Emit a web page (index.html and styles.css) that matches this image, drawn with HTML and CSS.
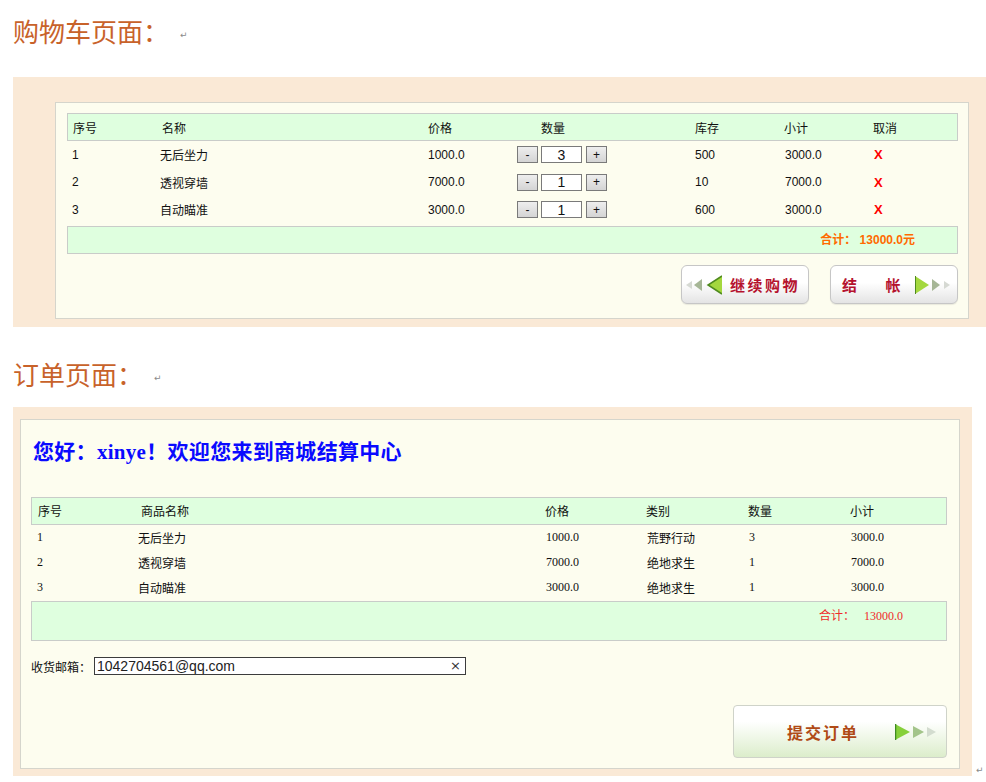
FILE: index.html
```html
<!DOCTYPE html>
<html lang="zh-CN">
<head>
<meta charset="utf-8">
<title>购物车与订单页面</title>
<link rel="stylesheet" href="styles.css">
</head>
<body>
<h2 class="doc-title doc-title-1">购物车页面：<span class="ret">↵</span></h2>
<section class="sec sec-cart">
  <div class="panel cart-panel">
    <div class="cart-table">
      <div class="c-row c-head">
        <span>序号</span><span>名称</span><span>价格</span><span class="qty-h">数量</span><span>库存</span><span>小计</span><span>取消</span>
      </div>
      <div class="c-row c-data">
        <span>1</span><span>无后坐力</span><span>1000.0</span>
        <span class="qty"><button class="qbtn">-</button><input class="qin" type="text" value="3"><button class="qbtn">+</button></span>
        <span>500</span><span>3000.0</span><span class="del">X</span>
      </div>
      <div class="c-row c-data">
        <span>2</span><span>透视穿墙</span><span>7000.0</span>
        <span class="qty"><button class="qbtn">-</button><input class="qin" type="text" value="1"><button class="qbtn">+</button></span>
        <span>10</span><span>7000.0</span><span class="del">X</span>
      </div>
      <div class="c-row c-data">
        <span>3</span><span>自动瞄准</span><span>3000.0</span>
        <span class="qty"><button class="qbtn">-</button><input class="qin" type="text" value="1"><button class="qbtn">+</button></span>
        <span>600</span><span>3000.0</span><span class="del">X</span>
      </div>
      <div class="c-total">合计： 13000.0元</div>
    </div>
    <div class="cart-actions">
      <a class="btn btn-back" href="#">
        <svg class="arr-l" width="36" height="20" viewBox="0 0 36 20">
          <polygon points="6,6 0,10 6,14" fill="#d6d9d3"/>
          <polygon points="16,4 8,10 16,16" fill="#a6b696"/>
          <polygon points="36,1 22,10 36,19" fill="#a4d83e"/>
          <polyline points="36,1 22,10 36,19" fill="none" stroke="#4f8a1e" stroke-width="1.5"/>
        </svg>
        <span class="btn-text">继续购物</span>
      </a>
      <a class="btn btn-pay" href="#">
        <span class="btn-text">结</span><span class="btn-text pay-2">帐</span>
        <svg class="arr-r" width="38" height="20" viewBox="0 0 38 20">
          <polygon points="0,1 14,10 0,19" fill="#a4d83e"/>
          <polyline points="0,1 0,19" fill="none" stroke="#4f8a1e" stroke-width="2"/>
          <polygon points="17,4 25,10 17,16" fill="#a6b696"/>
          <polygon points="29,6 35,10 29,14" fill="#d6d9d3"/>
        </svg>
      </a>
    </div>
  </div>
</section>

<h2 class="doc-title doc-title-2">订单页面：<span class="ret">↵</span></h2>
<div class="order-wrap">
  <section class="sec sec-order">
    <div class="panel order-panel">
      <h3 class="greet">您好：xinye！欢迎您来到商城结算中心</h3>
      <div class="order-table">
        <div class="o-row o-head">
          <span>序号</span><span>商品名称</span><span>价格</span><span>类别</span><span>数量</span><span>小计</span>
        </div>
        <div class="o-row o-data">
          <span>1</span><span class="nm">无后坐力</span><span class="pr">1000.0</span><span class="cat">荒野行动</span><span class="pr">3</span><span class="pr">3000.0</span>
        </div>
        <div class="o-row o-data">
          <span>2</span><span class="nm">透视穿墙</span><span class="pr">7000.0</span><span class="cat">绝地求生</span><span class="pr">1</span><span class="pr">7000.0</span>
        </div>
        <div class="o-row o-data">
          <span>3</span><span class="nm">自动瞄准</span><span class="pr">3000.0</span><span class="cat">绝地求生</span><span class="pr">1</span><span class="pr">3000.0</span>
        </div>
        <div class="o-total"><span class="o-total-l">合计：</span><span class="o-total-v">13000.0</span></div>
      </div>
      <div class="email-row">
        <label class="email-label" for="mail">收货邮箱：</label>
        <div class="email-box">
          <input id="mail" class="email-in" type="text" value="1042704561@qq.com">
          <span class="email-clear">×</span>
        </div>
      </div>
      <div class="submit-row">
        <a class="btn-submit" href="#">
          <span class="submit-text">提交订单</span>
          <svg class="arr-s" width="44" height="18" viewBox="0 0 44 18">
            <polygon points="0,1 15,9 0,17" fill="#86d03a"/>
            <polyline points="0,1 0,17" fill="none" stroke="#3f8a22" stroke-width="2.5"/>
            <polygon points="18,3 29,9 18,15" fill="#a3c48a"/>
            <polygon points="32,4 41,9 32,14" fill="#d3dccf"/>
          </svg>
        </a>
      </div>
    </div>
  </section>
  <span class="ret ret-end">↵</span>
</div>
</body>
</html>
```

FILE: styles.css
```css
* {
  box-sizing: border-box;
}

html,
body {
  margin: 0;
  padding: 0;
  background: #ffffff;
}

body {
  width: 986px;
  font-family: "Liberation Sans", "Noto Sans CJK SC", sans-serif;
  font-size: 12px;
  color: #111;
}

/* document headings */
.doc-title {
  margin: 0;
  padding-left: 13px;
  display: flex;
  align-items: center;
  font-family: "Noto Sans CJK SC", serif;
  font-weight: 400;
  font-size: 26px;
  line-height: 36px;
  color: #c8622a;
}

.doc-title-1 {
  padding-top: 13px;
  margin-bottom: 28px;
}

.doc-title-2 {
  margin-top: 28.5px;
  margin-bottom: 15.5px;
}

.ret {
  font-family: "DejaVu Sans", sans-serif;
  font-size: 9px;
  line-height: 10px;
  color: #8a8a8a;
  margin-left: 11px;
  margin-top: 8px;
}

/* beige sections */
.sec {
  background: #fae9d6;
  margin-left: 13px;
}

.panel {
  background: #fdfdef;
  border: 1px solid #d5d5cc;
}

/* cart */
.sec-cart {
  width: 973px;
  height: 250px;
  padding: 25px 0 0 42px;
}

.cart-panel {
  width: 914px;
  height: 217px;
  padding: 10px 10px 0 11px;
}

.cart-table {
  width: 891px;
}

.c-row {
  display: grid;
  grid-template-columns: 89px 266px 89px 178px 89px 89px 91px;
  align-items: center;
}

.c-row > span {
  padding-left: 5px;
  white-space: nowrap;
}

.c-head {
  height: 28px;
  background: #dfffdf;
  border: 1px solid #c9ccc9;
}

.c-head .qty-h {
  padding-left: 29px;
}

.c-data {
  height: 27.5px;
}

.c-data > span:nth-child(2) {
  padding-left: 4px;
}

.c-data > span:nth-child(3),
.c-data > span:nth-child(5) {
  padding-left: 6px;
}

.c-data > span:nth-child(6) {
  padding-left: 7px;
}

.c-data > span.qty {
  display: flex;
  align-items: center;
  padding-left: 6px;
}

.qbtn {
  width: 21px;
  height: 17px;
  margin: 0;
  padding: 0;
  border: 1px solid #7a7a7a;
  background: linear-gradient(#eeeeee, #d4d4d4);
  font-family: "Liberation Sans", sans-serif;
  font-size: 12px;
  line-height: 14px;
  color: #111;
}

.qbtn + .qin {
  margin-left: 3px;
}

.qin {
  width: 41px;
  height: 17px;
  margin: 0 4px 0 0;
  padding: 0;
  border: 1px solid #7a7a7a;
  background: #fff;
  text-align: center;
  font-family: "Liberation Sans", sans-serif;
  font-size: 14px;
  color: #111;
}

.c-data > span.del {
  padding-left: 7px;
  color: #ff0000;
  font-weight: bold;
  font-size: 13px;
}

.c-total {
  margin-top: 2.5px;
  height: 28px;
  background: #dfffdf;
  border: 1px solid #c9ccc9;
  text-align: right;
  padding-right: 42px;
  line-height: 26px;
  font-weight: bold;
  color: #ff6a00;
}

.cart-actions {
  width: 891px;
  margin-top: 11px;
  display: flex;
  justify-content: flex-end;
  gap: 21px;
}

.btn {
  width: 128px;
  height: 39px;
  display: flex;
  align-items: center;
  border: 1px solid #c6c6c6;
  border-radius: 6px;
  background: linear-gradient(#ffffff 0%, #ffffff 45%, #e4e4e4 100%);
  box-shadow: 0 1px 1px rgba(0, 0, 0, 0.08);
  text-decoration: none;
}

.btn-text {
  font-family: "Noto Sans CJK SC", sans-serif;
  font-weight: bold;
  font-size: 15px;
  letter-spacing: 2.5px;
  color: #b5122e;
  line-height: 20px;
}

.btn-back {
  padding-left: 4px;
}

.btn-back .arr-l {
  margin-right: 8px;
}

.btn-pay {
  padding-left: 11px;
}

.btn-pay .pay-2 {
  margin-left: 26px;
}

.btn-pay .arr-r {
  margin-left: 12px;
}

/* order */
.order-wrap {
  display: flex;
  align-items: flex-end;
}

.sec-order {
  width: 959px;
  height: 369px;
  padding: 12px 0 0 7px;
}

.ret-end {
  margin-left: 4px;
  margin-bottom: 1px;
}

.order-panel {
  width: 940px;
  height: 350px;
  padding: 0 10px;
}

.greet {
  margin: 0;
  padding: 17px 0 0 2px;
  font-family: "Liberation Serif", "Noto Sans CJK SC", serif;
  font-weight: bold;
  font-size: 21px;
  line-height: 30px;
  letter-spacing: 0.3px;
  color: #0a0aff;
}

.order-table {
  width: 916px;
  margin-top: 30px;
  font-family: "Liberation Serif", "Noto Sans CJK SC", serif;
  font-size: 12px;
}

.o-row {
  display: grid;
  grid-template-columns: 103px 404px 101px 102px 102px 104px;
  align-items: center;
}

.o-row > span {
  padding-left: 6px;
  white-space: nowrap;
}

.o-head {
  height: 28px;
  background: #dfffdf;
  border: 1px solid #c9ccc9;
}

.o-head > span {
  padding-left: 6px;
}

.o-data {
  height: 25px;
}

.o-data > span {
  padding-left: 6px;
}

.o-data > span.nm {
  padding-left: 4px;
}

.o-data > span.cat {
  padding-left: 8px;
}

.o-data > span.pr {
  padding-left: 8px;
}

.o-total {
  margin-top: 1px;
  height: 40px;
  background: #dfffdf;
  border: 1px solid #c9ccc9;
  display: flex;
  justify-content: flex-end;
  padding: 6px 43px 0 0;
  line-height: 16px;
  color: #f02a2a;
}

.o-total-v {
  margin-left: 9px;
}

.email-row {
  margin-top: 16px;
  display: flex;
  align-items: center;
  height: 18px;
}

.email-label {
  font-family: "Noto Sans CJK SC", sans-serif;
  font-size: 12px;
  color: #111;
  margin-right: 3px;
}

.email-box {
  width: 372px;
  height: 18px;
  display: flex;
  align-items: center;
  border: 1px solid #3c3c3c;
  background: #fff;
}

.email-in {
  flex: 1;
  min-width: 0;
  height: 16px;
  border: 0;
  padding: 0 0 0 2px;
  margin: 0;
  background: transparent;
  font-family: "Liberation Sans", sans-serif;
  font-size: 14px;
  color: #222;
  outline: none;
}

.email-clear {
  font-family: "DejaVu Sans", sans-serif;
  font-size: 13px;
  line-height: 14px;
  color: #333;
  padding-right: 4px;
}

.submit-row {
  margin-top: 30px;
  width: 916px;
  display: flex;
  justify-content: flex-end;
}

.btn-submit {
  width: 214px;
  height: 53px;
  display: flex;
  align-items: center;
  padding-left: 53px;
  border: 1px solid #cfd3c9;
  border-radius: 4px;
  background: linear-gradient(#ffffff 0%, #ffffff 30%, #dcedcb 100%);
  text-decoration: none;
}

.submit-text {
  font-family: "Noto Sans CJK SC", sans-serif;
  font-weight: bold;
  font-size: 16px;
  letter-spacing: 2px;
  line-height: 20px;
  color: #b04a16;
}

.arr-s {
  margin-left: 36px;
}
```
